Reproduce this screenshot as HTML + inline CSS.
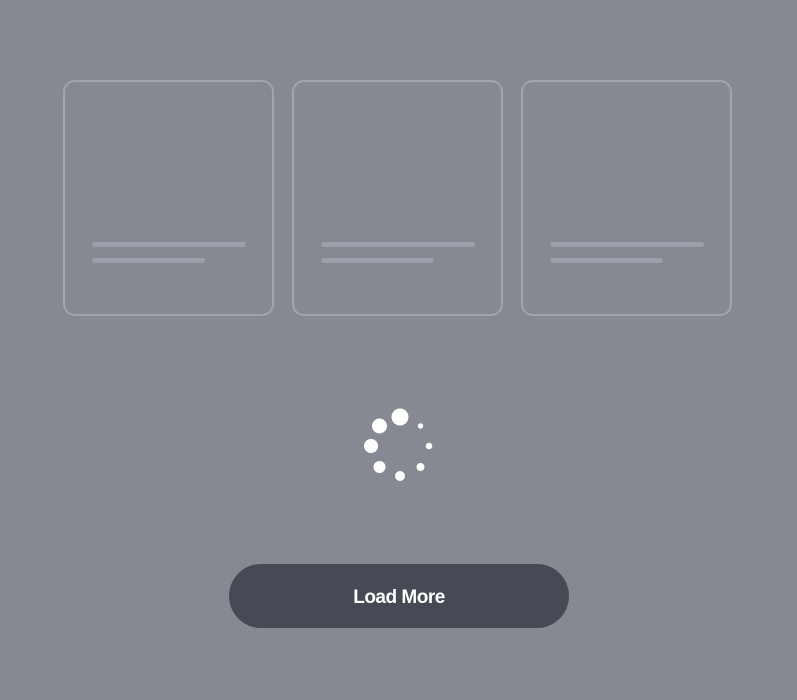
<!DOCTYPE html>
<html><head><style>
html,body{margin:0;padding:0}
body{width:797px;height:700px;background:#868892;position:relative;overflow:hidden;font-family:"Liberation Sans",sans-serif}
.card{position:absolute;top:80px;border:2px solid #a2a5b0;border-radius:12px;box-sizing:border-box;height:236px}
.l{position:absolute;left:27px;height:5px;border-radius:3px;background:#9c9ea9}
.btn{position:absolute;left:229px;top:564px;width:340px;height:64px;border-radius:32px;background:#464a55;color:#fff;font-weight:bold;font-size:19px;text-align:center;line-height:67px;letter-spacing:-0.5px}
</style></head><body>
<div class="card" style="left:63px;width:211px"><div class="l" style="top:160px;width:154px"></div><div class="l" style="top:176px;width:113px"></div></div>
<div class="card" style="left:292px;width:211px"><div class="l" style="top:160px;width:154px"></div><div class="l" style="top:176px;width:113px"></div></div>
<div class="card" style="left:521px;width:211px"><div class="l" style="top:160px;width:154px"></div><div class="l" style="top:176px;width:113px"></div></div>
<svg style="position:absolute;left:0;top:0" width="797" height="700">
<g fill="#fff">
<circle cx="400" cy="417" r="8.5"/>
<circle cx="379.5" cy="426" r="7.5"/>
<circle cx="371" cy="446" r="7"/>
<circle cx="379.5" cy="467" r="6"/>
<circle cx="400" cy="476" r="5"/>
<circle cx="420.5" cy="467" r="4"/>
<circle cx="429" cy="446" r="3.3"/>
<circle cx="420.5" cy="426" r="2.7"/>
</g></svg>
<div class="btn">Load More</div>
</body></html>
